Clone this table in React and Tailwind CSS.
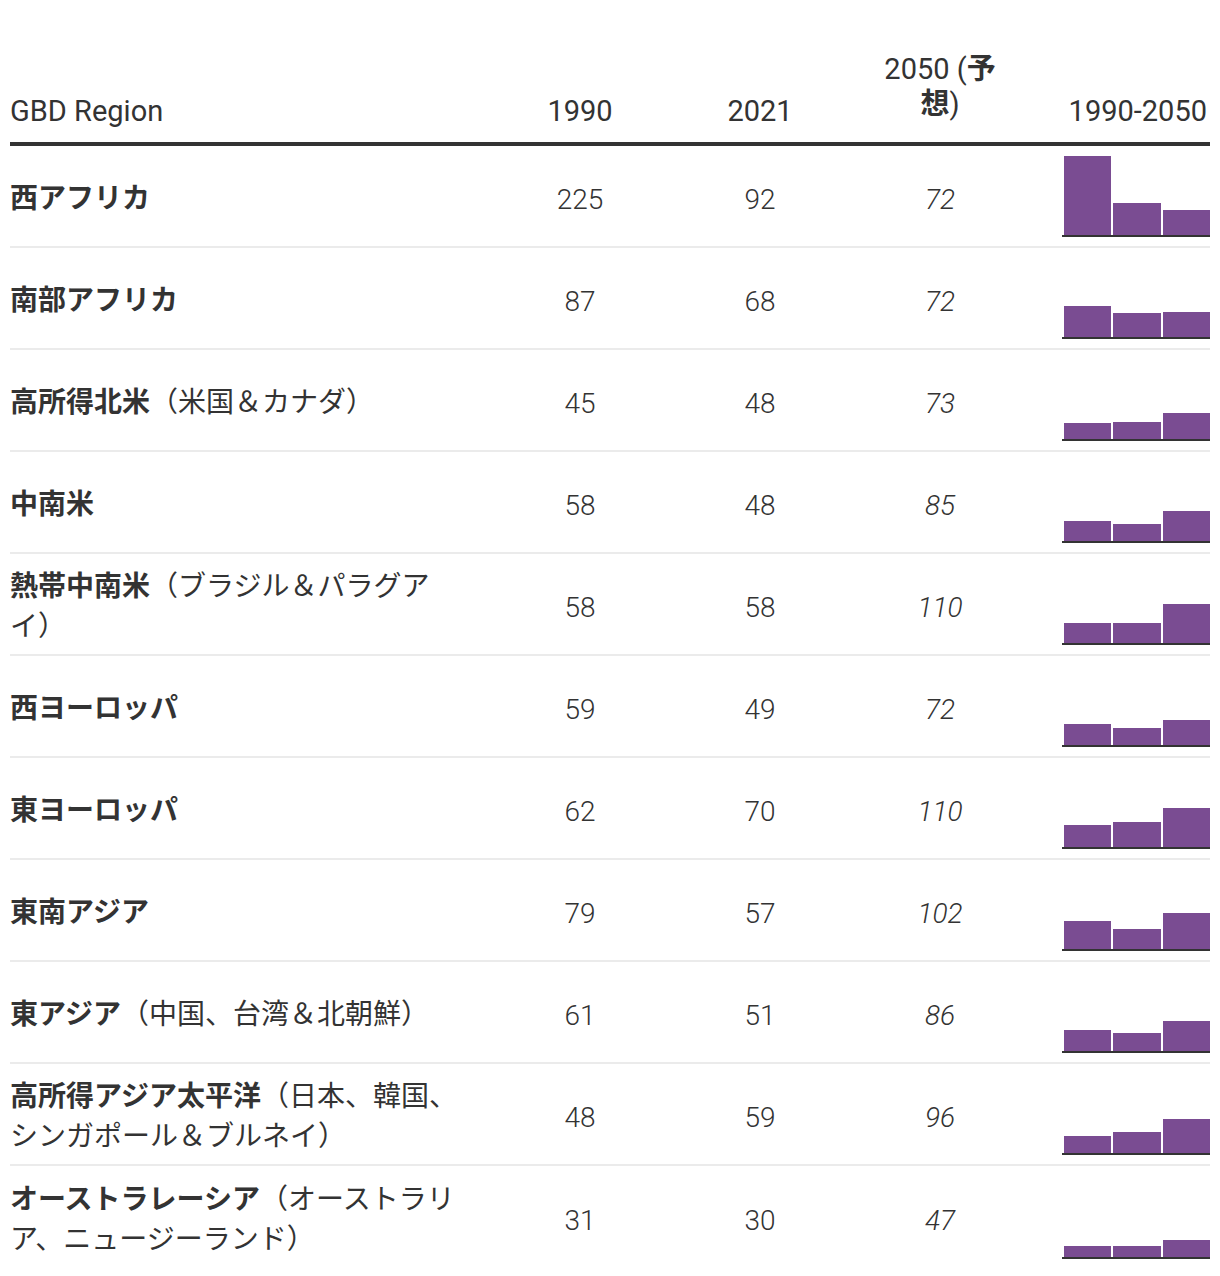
import React from "react";

const rows = [
  ["西アフリカ", "", 225, 92, 72],
  ["南部アフリカ", "", 87, 68, 72],
  ["高所得北米", "（米国＆カナダ）", 45, 48, 73],
  ["中南米", "", 58, 48, 85],
  ["熱帯中南米", "（ブラジル＆パラグアイ）", 58, 58, 110],
  ["西ヨーロッパ", "", 59, 49, 72],
  ["東ヨーロッパ", "", 62, 70, 110],
  ["東南アジア", "", 79, 57, 102],
  ["東アジア", "（中国、台湾＆北朝鮮）", 61, 51, 86],
  ["高所得アジア太平洋", "（日本、韓国、シンガポール＆ブルネイ）", 48, 59, 96],
  ["オーストラレーシア", "（オーストラリア、ニュージーランド）", 31, 30, 47],
];

function Spark({ values }) {
  return (
    <div className="w-[148px] flex items-end gap-[2px] pl-[2px] border-b-2 border-[#333333]">
      {values.map((v, i) => (
        <div
          key={i}
          className="flex-1 bg-[#7a4c92]"
          style={{ height: Math.round(v * 0.352) + "px" }}
        />
      ))}
    </div>
  );
}

export default function App() {
  return (
    <div className="bg-white w-[1220px] min-h-[1276px] px-[10px] text-[#333333] font-['Roboto','Noto_Sans_CJK_JP',sans-serif]">
      <div className="flex items-end h-[146px] pb-[13px] border-b-4 border-[#333333] text-[29px] leading-[35px]">
        <div className="w-[480px]">GBD Region</div>
        <div className="w-[180px] text-center">1990</div>
        <div className="w-[180px] text-center">2021</div>
        <div className="w-[180px] px-[30px] text-center pb-[7px]">
          2050 (<span className="font-bold">予想</span>)
        </div>
        <div className="w-[180px] text-right pr-[3px]">1990-2050</div>
      </div>
      {rows.map((r, i) => (
        <div
          key={i}
          className={
            "flex h-[102px] " +
            (i < rows.length - 1 ? "border-b-2 border-[#ebebeb]" : "")
          }
        >
          <div className="w-[480px] pr-[24px] pt-[6px] flex items-center text-[28px] leading-[40px]">
            <div>
              <span className="font-bold">{r[0]}</span>
              {r[1]}
            </div>
          </div>
          <div className="w-[180px] flex items-center justify-center pt-[7px] text-[28px] leading-[40px] font-light">
            {r[2]}
          </div>
          <div className="w-[180px] flex items-center justify-center pt-[7px] text-[28px] leading-[40px] font-light">
            {r[3]}
          </div>
          <div className="w-[180px] flex items-center justify-center pt-[7px] text-[28px] leading-[40px] font-light italic">
            {r[4]}
          </div>
          <div className="w-[180px] flex items-end justify-end pb-[9px]">
            <Spark values={[r[2], r[3], r[4]]} />
          </div>
        </div>
      ))}
    </div>
  );
}
